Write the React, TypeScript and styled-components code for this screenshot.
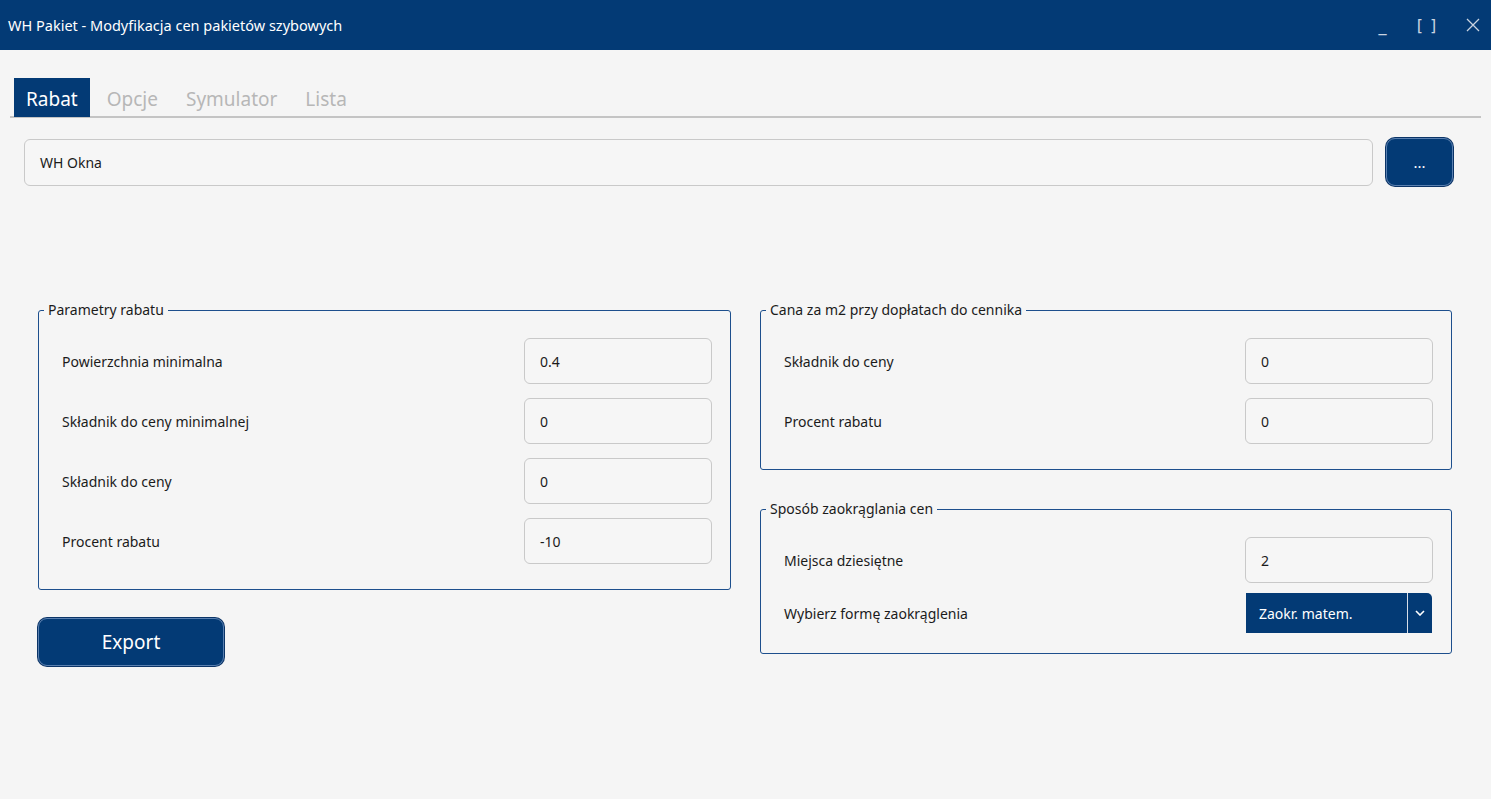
import React from "react";
import styled, { createGlobalStyle } from "styled-components";

const Global = createGlobalStyle`
  html, body { margin: 0; padding: 0; }
  body {
    background: #f5f5f5;
    font-family: "Noto Sans", "Open Sans", "Liberation Sans", sans-serif;
    color: #1b1b1b;
  }
  * { box-sizing: border-box; }
`;

const Window = styled.div`
  width: 1491px;
  height: 799px;
  background: #f5f5f5;
  display: flex;
  flex-direction: column;
  overflow: hidden;
`;

const TitleBar = styled.div`
  height: 50px;
  flex: none;
  background: #033a75;
  display: flex;
  align-items: center;
  padding: 0 0 0 8px;
`;

const Title = styled.div`
  flex: 1;
  color: #ffffff;
  font-size: 14.5px;
  padding-bottom: 1px;
`;

const WinButtons = styled.div`
  display: flex;
  align-items: center;
  height: 100%;
`;

const WinButton = styled.div<{ $w: number }>`
  width: ${(p) => p.$w}px;
  height: 100%;
  display: flex;
  align-items: center;
  justify-content: center;
  color: #c9d3e0;
  font-size: 16px;
  letter-spacing: 1px;
  font-family: "DejaVu Sans", sans-serif;
`;

const Body = styled.div`
  flex: 1;
  display: flex;
  flex-direction: column;
  padding-top: 28px;
`;

const TabStrip = styled.div`
  margin: 0 10px;
  padding-left: 4px;
  height: 40px;
  border-bottom: 2px solid #c4c4c4;
  display: flex;
  align-items: stretch;
`;

const Tab = styled.div<{ $active?: boolean }>`
  height: 39px;
  display: flex;
  align-items: center;
  padding: 2px ${(p) => (p.$active ? "12px" : "14px")} 0;
  margin-right: ${(p) => (p.$active ? "3px" : "0")};
  font-size: 19px;
  color: ${(p) => (p.$active ? "#ffffff" : "#b7b7b7")};
  background: ${(p) => (p.$active ? "#033a75" : "transparent")};
`;

const PathRow = styled.div`
  margin: 20px 38px 0 24px;
  display: flex;
  align-items: center;
  gap: 13px;
`;

const TextField = styled.div<{ $w?: number; $h?: number }>`
  ${(p) => (p.$w ? `width: ${p.$w}px; flex: none;` : "flex: 1;")}
  height: ${(p) => p.$h ?? 46}px;
  border: 1px solid #c9c9c9;
  border-radius: 6px;
  background: #f6f6f6;
  display: flex;
  align-items: center;
  padding-left: 15px;
  font-size: 14px;
  color: #1b1b1b;
`;

const BlueButton = styled.div<{ $w: number; $h: number; $fs: number }>`
  width: ${(p) => p.$w}px;
  height: ${(p) => p.$h}px;
  flex: none;
  background: #033a75;
  border: 1px solid #5a80b0;
  box-shadow: 0 0 0 1px #0b3467;
  border-radius: 9px;
  color: #ffffff;
  font-size: ${(p) => p.$fs}px;
  display: flex;
  align-items: center;
  justify-content: center;
`;

const Columns = styled.div`
  margin: 114px 39px 0 38px;
  display: grid;
  grid-template-columns: 693px 692px;
  column-gap: 29px;
  align-items: start;
`;

const Column = styled.div`
  display: flex;
  flex-direction: column;
`;

const Group = styled.fieldset<{ $mt?: number }>`
  margin: ${(p) => p.$mt ?? 0}px 0 0 0;
  border: 1px solid #1d4f8d;
  border-radius: 3px;
  padding: 0;
  min-width: 0;
`;

const Legend = styled.legend`
  margin-left: 5px;
  padding: 0 4px;
  font-size: 14px;
  line-height: 20px;
  color: #1b1b1b;
`;

const Rows = styled.div<{ $gap: number; $pb: number }>`
  display: flex;
  flex-direction: column;
  gap: ${(p) => p.$gap}px;
  padding: 18px 18px ${(p) => p.$pb}px 23px;
`;

const Row = styled.div`
  display: flex;
  align-items: center;
  justify-content: space-between;
`;

const Label = styled.div`
  font-size: 14px;
  color: #1b1b1b;
`;

const Select = styled.div`
  width: 186px;
  height: 40px;
  display: flex;
  margin-right: 1px;
`;

const SelectValue = styled.div`
  flex: 1;
  background: #033a75;
  color: #ffffff;
  font-size: 14px;
  display: flex;
  align-items: center;
  padding-left: 13px;
`;

const SelectArrow = styled.div`
  width: 25px;
  background: #033a75;
  border-left: 1px solid #d7dee8;
  border-top-right-radius: 5px;
  display: flex;
  align-items: center;
  justify-content: center;
`;

const ExportWrap = styled.div`
  margin-top: 28px;
`;

const Field = ({ label, value }: { label: string; value: string }) => (
  <Row>
    <Label>{label}</Label>
    <TextField $w={188}>{value}</TextField>
  </Row>
);

export default function App() {
  return (
    <Window>
      <Global />
      <TitleBar>
        <Title>WH Pakiet - Modyfikacja cen pakietów szybowych</Title>
        <WinButtons>
          <WinButton $w={32}>_</WinButton>
          <WinButton $w={56}>[ ]</WinButton>
          <WinButton $w={36}>
            <svg width="14" height="14" viewBox="0 0 14 14">
              <path d="M1 1 L13 13 M13 1 L1 13" stroke="#c9d3e0" strokeWidth="1.3" />
            </svg>
          </WinButton>
        </WinButtons>
      </TitleBar>
      <Body>
        <TabStrip>
          <Tab $active>Rabat</Tab>
          <Tab>Opcje</Tab>
          <Tab>Symulator</Tab>
          <Tab>Lista</Tab>
        </TabStrip>
        <PathRow>
          <TextField $h={47}>WH Okna</TextField>
          <BlueButton $w={67} $h={48} $fs={15}>...</BlueButton>
        </PathRow>
        <Columns>
          <Column>
            <Group>
              <Legend>Parametry rabatu</Legend>
              <Rows $gap={14} $pb={25}>
                <Field label="Powierzchnia minimalna" value="0.4" />
                <Field label="Składnik do ceny minimalnej" value="0" />
                <Field label="Składnik do ceny" value="0" />
                <Field label="Procent rabatu" value="-10" />
              </Rows>
            </Group>
            <ExportWrap>
              <BlueButton $w={186} $h={48} $fs={19}>Export</BlueButton>
            </ExportWrap>
          </Column>
          <Column>
            <Group>
              <Legend>Cana za m2 przy dopłatach do cennika</Legend>
              <Rows $gap={14} $pb={25}>
                <Field label="Składnik do ceny" value="0" />
                <Field label="Procent rabatu" value="0" />
              </Rows>
            </Group>
            <Group $mt={29}>
              <Legend>Sposób zaokrąglania cen</Legend>
              <Rows $gap={10} $pb={20}>
                <Field label="Miejsca dziesiętne" value="2" />
                <Row>
                  <Label>Wybierz formę zaokrąglenia</Label>
                  <Select>
                    <SelectValue>Zaokr. matem.</SelectValue>
                    <SelectArrow>
                      <svg width="10" height="6" viewBox="0 0 10 6">
                        <path d="M1 1 L5 5 L9 1" stroke="#ffffff" strokeWidth="1.6" fill="none" />
                      </svg>
                    </SelectArrow>
                  </Select>
                </Row>
              </Rows>
            </Group>
          </Column>
        </Columns>
      </Body>
    </Window>
  );
}
